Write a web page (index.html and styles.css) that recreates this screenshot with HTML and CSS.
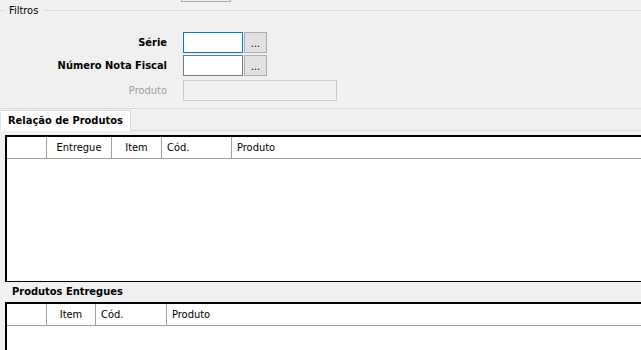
FILE: index.html
```html
<!DOCTYPE html>
<html lang="pt">
<head>
<meta charset="utf-8">
<link rel="stylesheet" href="styles.css">
</head>
<body>
<div class="window">
  <div class="stub"></div>
  <div class="group-head">
    <span class="gline short"></span>
    <span class="gtitle">Filtros</span>
    <span class="gline long"></span>
  </div>
  <div class="form">
    <div class="row">
      <label class="lbl bold">Série</label>
      <div class="field">
        <div class="input focus"></div>
        <div class="btn">...</div>
      </div>
    </div>
    <div class="row">
      <label class="lbl bold">Número Nota Fiscal</label>
      <div class="field">
        <div class="input"></div>
        <div class="btn">...</div>
      </div>
    </div>
    <div class="row row-disabled">
      <label class="lbl disabled">Produto</label>
      <div class="field">
        <div class="input-disabled"></div>
      </div>
    </div>
  </div>
  <div class="sep"></div>
  <div class="tabstrip">
    <div class="tab">Relação de Produtos</div>
    <div class="tabfill"></div>
  </div>
  <div class="tabpage">
    <div class="grid grid1">
      <div class="ghead">
        <div class="gc ind"></div>
        <div class="gc c-ent center">Entregue</div>
        <div class="gc c-item center">Item</div>
        <div class="gc c-cod">Cód.</div>
        <div class="gc c-prod">Produto</div>
      </div>
      <div class="gbody"></div>
    </div>
    <div class="section-label">Produtos Entregues</div>
    <div class="grid grid2">
      <div class="ghead">
        <div class="gc ind"></div>
        <div class="gc c-item2 center">Item</div>
        <div class="gc c-cod2">Cód.</div>
        <div class="gc c-prod">Produto</div>
      </div>
      <div class="gbody"></div>
    </div>
  </div>
</div>
</body>
</html>
```
FILE: styles.css
```css
html, body {
  margin: 0;
  padding: 0;
}
body {
  background: #f0f0f0;
  font-family: "DejaVu Sans Condensed", "Liberation Sans", sans-serif;
  font-size: 11px;
  color: #000;
  overflow: hidden;
}
.window {
  width: 641px;
  height: 350px;
  overflow: hidden;
}
.stub {
  margin-left: 181px;
  width: 48px;
  height: 1px;
  border: 1px solid #adadad;
  border-top: none;
}
.group-head {
  display: flex;
  align-items: center;
  height: 17px;
}
.gline {
  height: 1px;
  background: #dcdcdc;
}
.gline.short {
  width: 6px;
}
.gline.long {
  flex: 1;
}
.gtitle {
  padding: 0 6px 0 3px;
  line-height: 17px;
}
.form {
  margin-top: 13px;
  display: flex;
  flex-direction: column;
  gap: 2px;
}
.row {
  display: flex;
  align-items: center;
  height: 21px;
  gap: 16px;
}
.row-disabled {
  margin-top: 2px;
}
.lbl {
  width: 167px;
  text-align: right;
}
.bold {
  font-weight: bold;
}
.disabled {
  color: #a0a0a0;
}
.field {
  display: flex;
  gap: 1px;
  height: 21px;
}
.input {
  width: 58px;
  height: 19px;
  border: 1px solid #7a7a7a;
  background: #fff;
}
.input.focus {
  border-color: #0078d7;
}
.btn {
  width: 21px;
  height: 19px;
  border: 1px solid #adadad;
  background: #e1e1e1;
  text-align: center;
  line-height: 21px;
  font-size: 11px;
}
.input-disabled {
  width: 152px;
  height: 19px;
  border: 1px solid #cccccc;
  background: #f0f0f0;
}
.sep {
  margin-top: 7px;
  height: 1px;
  background: #dadada;
}
.tabstrip {
  margin-top: 1px;
  display: flex;
  height: 21px;
}
.tab {
  width: 122px;
  height: 20px;
  padding-left: 7px;
  border: 1px solid #d9d9d9;
  border-bottom: none;
  border-left-color: #e3e3e3;
  background: #fff;
  font-weight: bold;
  line-height: 20px;
  white-space: nowrap;
}
.tabfill {
  flex: 1;
  border-bottom: 1px solid #d9d9d9;
}
.tabpage {
  padding-top: 4px;
}
.grid {
  margin-left: 5px;
  margin-right: -20px;
  border-top: 2px solid #000;
  border-left: 2px solid #000;
  background: #fff;
}
.grid1 {
  border-bottom: 1px solid #000;
}
.ghead {
  display: flex;
  height: 21px;
  border-bottom: 1px solid #a0a0a0;
  background: #fff;
}
.gc {
  line-height: 21px;
  white-space: nowrap;
  border-right: 1px solid #a0a0a0;
  padding-left: 5px;
  box-sizing: border-box;
}
.gc.center {
  text-align: center;
  padding-left: 0;
}
.ind {
  width: 40px;
}
.c-ent {
  width: 65px;
}
.c-item {
  width: 50px;
}
.c-cod {
  width: 70px;
}
.c-prod {
  flex: 1;
  border-right: none;
}
.c-item2 {
  width: 49px;
}
.c-cod2 {
  width: 71px;
}
.grid1 .gbody {
  height: 122px;
}
.grid2 .gbody {
  height: 60px;
}
.section-label {
  height: 20px;
  line-height: 20px;
  padding-left: 12px;
  font-weight: bold;
}
```
